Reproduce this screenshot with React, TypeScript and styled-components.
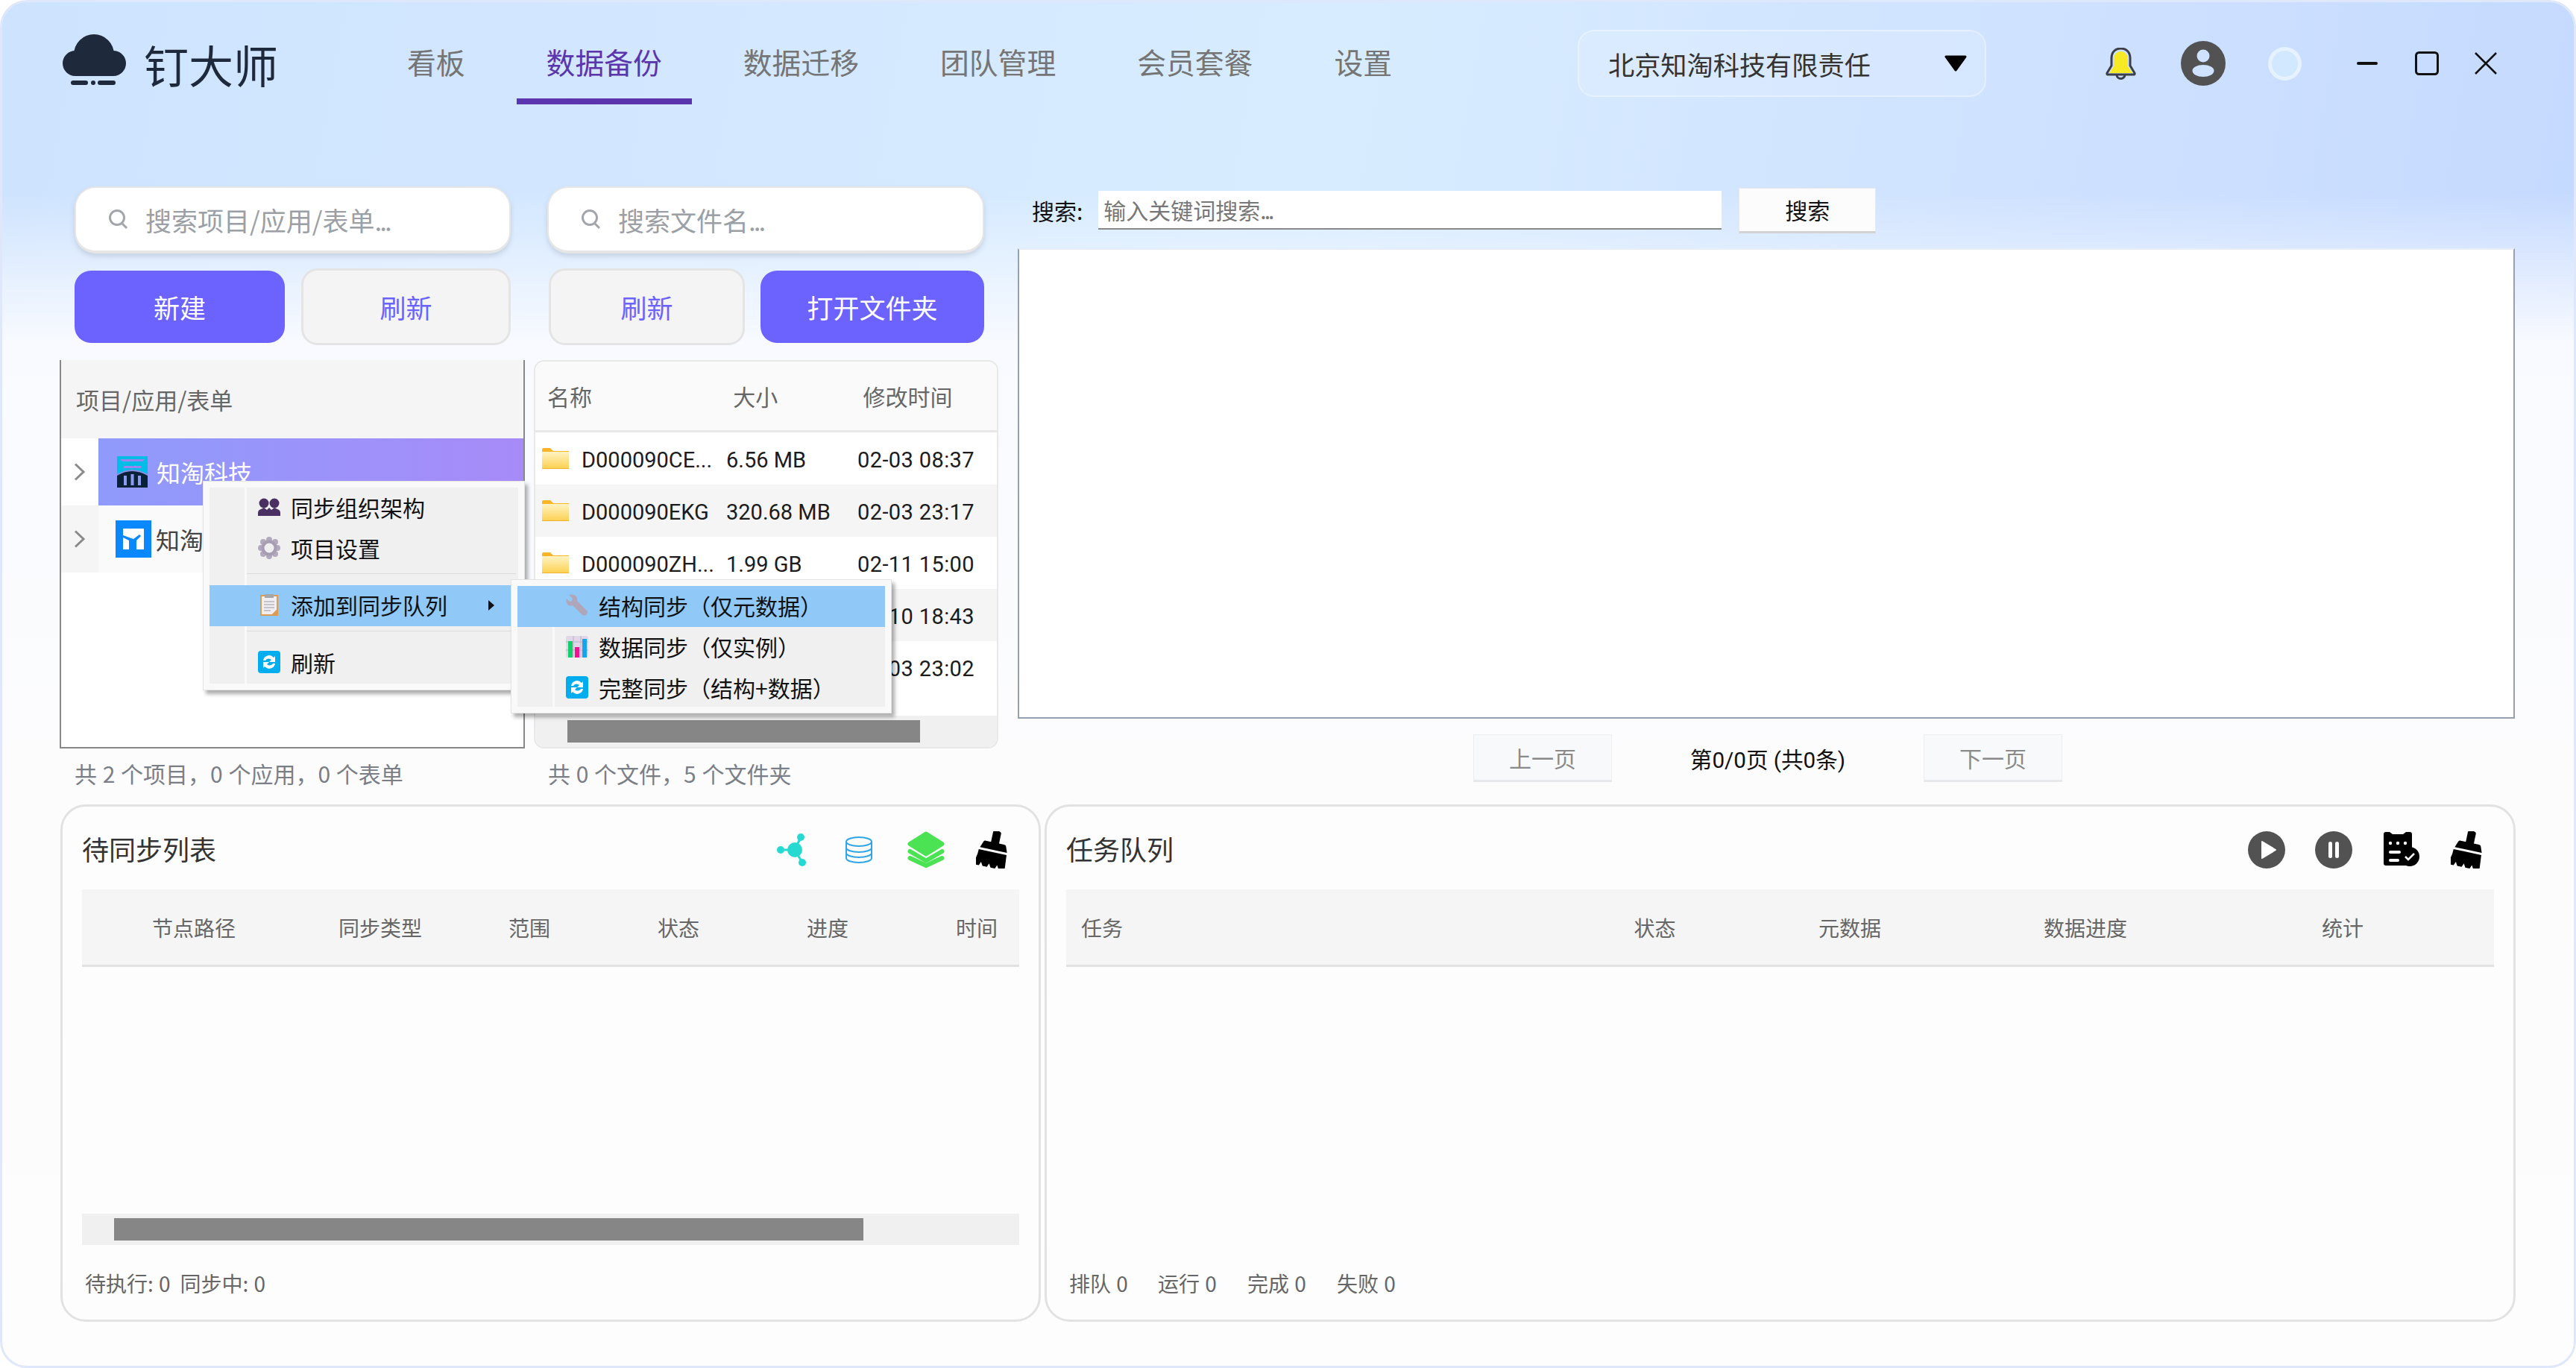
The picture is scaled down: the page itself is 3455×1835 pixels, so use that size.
import styled, { createGlobalStyle } from "styled-components";

const GlobalStyle = createGlobalStyle`
  html, body {
    margin: 0;
    padding: 0;
    background: #fff;
  }
  * {
    box-sizing: border-box;
  }
  body {
    font-family: "Noto Sans CJK SC", "Noto Sans", sans-serif;
  }
`;

const LATIN = `Roboto, "Noto Sans CJK SC", sans-serif`;

const Window = styled.div`
  position: relative;
  width: 3455px;
  height: 1835px;
  overflow: hidden;
  border-radius: 36px;
  border: 3px solid #dfe8fa;
  background:
    linear-gradient(180deg, rgba(248, 250, 255, 0) 0%, rgba(248, 250, 255, 0) 14%, #f8faff 25%, #fcfcfd 55%, #fdfdfd 100%),
    linear-gradient(100deg, #cee3fe 0%, #d3e8ff 25%, #d8ecff 48%, #cfe2ff 72%, #c2d7ff 100%);
`;

/* top bar */
const TopBar = styled.header`
  display: flex;
  align-items: flex-start;
  height: 247px;
  padding: 40px 0 0 81px;
`;

const Logo = styled.div`
  display: flex;
  align-items: flex-start;
  width: 422px;
  padding-top: 3px;
  color: #1e293b;
  font-size: 60px;
  line-height: 60px;
`;

const LogoText = styled.span`
  margin: 10px 0 0 24px;
`;

const Nav = styled.nav`
  display: flex;
  gap: 29px;
  width: 1610px;
`;

const NavItem = styled.div<{ $active?: boolean }>`
  height: 97px;
  padding: 11px 40px 0;
  font-size: 38.8px;
  line-height: 56px;
  color: ${({ $active }) => ($active ? "#5b35ad" : "#757575")};
  border-bottom: 8px solid ${({ $active }) => ($active ? "#5b35ad" : "transparent")};
`;

const CompanySelect = styled.div`
  display: flex;
  align-items: center;
  justify-content: space-between;
  width: 548px;
  height: 90px;
  margin-top: -3px;
  padding: 0 23px 0 39px;
  font-size: 35.2px;
  color: #333;
  background: rgba(255, 255, 255, 0.14);
  border: 2px solid rgba(255, 255, 255, 0.35);
  border-radius: 22px;
`;

const TopIcons = styled.div`
  display: flex;
  align-items: center;
  height: 90px;
  margin-top: -3px;
`;

const PlacedIcon = styled.svg<{ $left: number }>`
  display: block;
  flex: none;
  margin-left: ${({ $left }) => $left}px;
`;

const StatusDot = styled.div`
  width: 45px;
  height: 45px;
  margin-left: 57px;
  border-radius: 50%;
  background: #d2e8ff;
  border: 5px solid rgba(255, 255, 255, 0.45);
`;

/* main area */
const Main = styled.main`
  display: grid;
  grid-template-columns: 624px 623px 2008px;
  column-gap: 12px;
  height: 829px;
  padding-left: 77px;
`;

const Column = styled.section`
  display: flex;
  flex-direction: column;
`;

const RightColumn = styled(Column)`
  width: 2008px;
  margin-left: 14px;
`;

const SearchBox = styled.div<{ $left: number }>`
  display: flex;
  align-items: center;
  height: 90px;
  margin: 0 19px 20px ${({ $left }) => $left}px;
  padding-left: 43px;
  background: #fff;
  border-radius: 28px;
  border: 2px solid #e6e6e6;
  border-bottom-width: 4px;
  box-shadow: 0 4px 6px rgba(120, 130, 150, 0.25);
  font-size: 35px;
  color: #9aa0a6;
`;

const SearchText = styled.span`
  margin-left: 23px;
  white-space: nowrap;
`;

const Dots = styled.span`
  letter-spacing: -3px;
`;

const ButtonRow = styled.div<{ $gap: number }>`
  display: flex;
  gap: ${({ $gap }) => $gap}px;
  height: 103px;
  margin: 0 19px 20px 20px;
`;

const PrimaryButton = styled.div<{ $w: number }>`
  display: flex;
  align-items: center;
  justify-content: center;
  width: ${({ $w }) => $w}px;
  height: 97px;
  margin-top: 3px;
  border-radius: 22px;
  background: #6c63ff;
  color: #fff;
  font-size: 35px;
`;

const GhostButton = styled.div<{ $w: number }>`
  display: flex;
  align-items: center;
  justify-content: center;
  width: ${({ $w }) => $w}px;
  border-radius: 22px;
  background: #f4f4f4;
  border: 3px solid #e4e4e4;
  color: #6c63ff;
  font-size: 35px;
`;

const TreePanel = styled.div`
  height: 521px;
  border: 2px solid #888;
  border-top: none;
  background: #fff;
`;

const TreeHeader = styled.div`
  display: flex;
  align-items: center;
  height: 105px;
  padding-left: 20px;
  background: #f5f5f5;
  font-size: 31px;
  color: #666;
`;

const TreeRow = styled.div`
  display: flex;
  height: 90px;
`;

const TreeArrow = styled.div<{ $tint?: boolean }>`
  display: flex;
  align-items: center;
  justify-content: center;
  width: 50px;
  background: ${({ $tint }) => ($tint ? "#f5f5f5" : "#fff")};
`;

const TreeLabel = styled.div<{ $selected?: boolean }>`
  flex: 1;
  display: flex;
  align-items: center;
  gap: ${({ $selected }) => ($selected ? 12 : 6)}px;
  padding-left: ${({ $selected }) => ($selected ? 25 : 23)}px;
  font-size: 32px;
  color: ${({ $selected }) => ($selected ? "#fff" : "#444")};
  background: ${({ $selected }) => ($selected ? "linear-gradient(90deg, #8f9bfb, #a78bf8)" : "#fafafa")};
`;

const Summary = styled.div<{ $left: number }>`
  margin: 11px 0 0 ${({ $left }) => $left}px;
  font-size: 30px;
  line-height: 44px;
  word-spacing: 1px;
  color: #7a7f87;
  white-space: nowrap;
`;

const FilePanel = styled.div`
  display: flex;
  flex-direction: column;
  height: 521px;
  border: 2px solid #e8e8e8;
  border-radius: 14px;
  background: #fff;
  overflow: hidden;
`;

const FileHeader = styled.div`
  display: flex;
  align-items: center;
  flex: none;
  height: 95px;
  background: #fafafa;
  border-bottom: 3px solid #e8e8e8;
  font-size: 30px;
  color: #666;
`;

const FileHead = styled.div<{ $w: number; $pad: number }>`
  width: ${({ $w }) => $w}px;
  padding-left: ${({ $pad }) => $pad}px;
`;

const FileRows = styled.div`
  flex: 1;
`;

const FileRow = styled.div<{ $alt?: boolean }>`
  display: flex;
  align-items: center;
  height: 70px;
  padding-left: 9px;
  font-family: ${LATIN};
  font-size: 29px;
  color: #1c1c1c;
  background: ${({ $alt }) => ($alt ? "#f5f5f5" : "#fff")};
`;

const FileName = styled.div`
  width: 194px;
  margin-left: 17px;
  padding-top: 3px;
  white-space: nowrap;
  overflow: hidden;
`;

const FileSize = styled.div`
  width: 176px;
  padding-top: 3px;
  white-space: nowrap;
`;

const FileTime = styled.div`
  padding-top: 3px;
  letter-spacing: 0.4px;
  white-space: nowrap;
`;

const ScrollTrack = styled.div<{ $pad: number; $h: number }>`
  flex: none;
  height: ${({ $h }) => $h}px;
  padding: 6px 0 6px ${({ $pad }) => $pad}px;
  background: #f0f0f0;
`;

const ScrollThumb = styled.div<{ $w: number }>`
  width: ${({ $w }) => $w}px;
  height: 100%;
  background: #868686;
`;

/* right side search + preview */
const QueryRow = styled.div`
  display: flex;
  align-items: center;
  height: 62px;
  margin: 1px 0 20px;
  padding-left: 19px;
  font-size: 30px;
  color: #111;
`;

const QueryInput = styled.div`
  display: flex;
  align-items: center;
  width: 836px;
  height: 52px;
  margin-left: 21px;
  padding-left: 7px;
  background: #fff;
  border-bottom: 2px solid #888;
  color: #777;
  white-space: pre;
`;

const QueryButton = styled.div`
  display: flex;
  align-items: center;
  justify-content: center;
  width: 184px;
  height: 61px;
  margin-left: 23px;
  background: #fcfcfc;
  border: 1px solid #e8e8e8;
  border-bottom: 3px solid #d2d2d2;
`;

const Preview = styled.div`
  height: 631px;
  background: #fff;
  border: 2px solid #97a0b2;
  border-top: 2px solid #e6edf8;
`;

const Pager = styled.div`
  display: flex;
  align-items: center;
  height: 64px;
  margin: 21px 0 0 611px;
  font-size: 30px;
  color: #111;
`;

const PagerButton = styled.div`
  display: flex;
  align-items: center;
  justify-content: center;
  width: 186px;
  height: 64px;
  background: #f8f9fb;
  border: 1px solid #eceef2;
  border-bottom: 3px solid #e6e8ec;
  color: #8a8a8a;
`;

const PagerInfo = styled.div`
  width: 418px;
  text-align: center;
  font-family: ${LATIN};
  font-size: 29.6px;
`;

/* bottom panels */
const Bottom = styled.div`
  display: flex;
  gap: 5px;
  height: 694px;
  padding-left: 78px;
`;

const Panel = styled.section<{ $w: number }>`
  display: flex;
  flex-direction: column;
  width: ${({ $w }) => $w}px;
  padding: 0 26px 0 26px;
  background: #fdfdfd;
  border: 3px solid #e2e2e2;
  border-radius: 34px;
`;

const PanelHead = styled.div`
  display: flex;
  align-items: center;
  justify-content: space-between;
  flex: none;
  height: 111px;
`;

const PanelTitle = styled.h2`
  margin: 0;
  font-size: 36px;
  font-weight: 400;
  color: #333;
`;

const ToolIcons = styled.div`
  display: flex;
  align-items: center;
  padding: 4px 12px 0 0;
`;

const TableHead = styled.div`
  display: flex;
  flex: none;
  align-items: center;
  height: 104px;
  overflow: hidden;
  background: #f5f5f5;
  border-bottom: 3px solid #e2e2e2;
  font-size: 28px;
  color: #666;
`;

const HeadCell = styled.div<{ $w: number; $left?: boolean }>`
  flex: none;
  width: ${({ $w }) => $w}px;
  text-align: ${({ $left }) => ($left ? "left" : "center")};
  padding-left: ${({ $left }) => ($left ? 20 : 0)}px;
`;

const TableBody = styled.div`
  flex: 1;
`;

const Stats = styled.div`
  display: flex;
  align-items: center;
  flex: none;
  height: 100px;
  padding-top: 2px;
  font-size: 28px;
  color: #666;
`;

const StatItem = styled.span<{ $w: number }>`
  width: ${({ $w }) => $w}px;
  padding-left: 4px;
  word-spacing: 1px;
  white-space: nowrap;
`;

/* context menus */
const Menu = styled.div<{ $left: number; $top: number; $w: number; $h: number }>`
  position: absolute;
  left: ${({ $left }) => $left}px;
  top: ${({ $top }) => $top}px;
  width: ${({ $w }) => $w}px;
  height: ${({ $h }) => $h}px;
  padding: 8px;
  background: #f9f9f9;
  border: 1px solid #e4e4e4;
  box-shadow: 4px 5px 5px rgba(0, 0, 0, 0.32);
`;

const MenuInner = styled.div`
  display: flex;
  flex-direction: column;
  height: 100%;
  background: linear-gradient(90deg, #f0f0f0 47px, #f9f9f9 47px, #f9f9f9 50px, #f0f0f0 50px);
`;

const MenuItem = styled.div<{ $hover?: boolean }>`
  position: relative;
  display: flex;
  align-items: center;
  flex: none;
  height: 55px;
  padding: 0 0 4px 65px;
  font-size: 30px;
  color: #111;
  white-space: nowrap;
  background: ${({ $hover }) => ($hover ? "#90c8f8" : "transparent")};
`;

const MenuIcon = styled.svg`
  flex: none;
  margin-right: 14px;
`;

const MenuRule = styled.div<{ $before: number; $after: number }>`
  height: 2px;
  margin: ${({ $before, $after }) => `${$before}px 3px ${$after}px 50px`};
  background: #dcdcdc;
`;

const SubArrow = styled.div`
  position: absolute;
  right: 32px;
  top: 20px;
  width: 0;
  height: 0;
  border-left: 8px solid #111;
  border-top: 7px solid transparent;
  border-bottom: 7px solid transparent;
`;

const Chevron = () => (
  <svg width="16" height="24" viewBox="0 0 16 24" fill="none" stroke="#8a8a8a" strokeWidth="3">
    <path d="M2 1.5 13 12 2 22.5" />
  </svg>
);

const Magnifier = () => (
  <svg width="27" height="28" viewBox="0 0 27 28" fill="none" stroke="#a2a6ac" strokeWidth="3">
    <circle cx="12" cy="12" r="9.5" />
    <path d="M19 20l6 6" />
  </svg>
);

const Folder = () => (
  <svg width="36" height="28" viewBox="0 0 36 28">
    <defs>
      <linearGradient id="folderFill" x1="0" y1="0" x2="0" y2="1">
        <stop offset="0" stopColor="#fff3c4" />
        <stop offset="1" stopColor="#fdd050" />
      </linearGradient>
    </defs>
    <path d="M0 2a2 2 0 0 1 2-2h9l4 4h21v4H0z" fill="#f9b428" />
    <rect x="0" y="5" width="36" height="23" fill="url(#folderFill)" />
    <rect x="0" y="27" width="36" height="1" fill="#f0b030" />
  </svg>
);

const Broom = ({ left }: { left: number }) => (
  <PlacedIcon $left={left} width="46" height="50" viewBox="0 0 46 50">
    <g transform="rotate(12 23 25)">
      <path d="M18 2a3 3 0 0 1 3-3h5a3 3 0 0 1 3 3v13h7a3 3 0 0 1 3 2l3 8H5l3-8a3 3 0 0 1 3-2h7z" fill="#000" />
      <path d="M4 28h38l1.500 18a3 3 0 0 1-3 3h-5l-3-5-2 5h-6l-3-5-2 5h-6l-3-5-2 5H4q-4 0-3-4l1-3q2-6 2-14z" fill="#000" />
    </g>
  </PlacedIcon>
);

const CloudLogo = () => (
  <svg width="85" height="69" viewBox="0 0 85 69" fill="#1e293b">
    <circle cx="17" cy="39" r="17" />
    <circle cx="68" cy="39" r="17" />
    <circle cx="42" cy="27" r="27" />
    <rect x="17" y="28" width="51" height="28" />
    <rect x="11" y="62" width="23" height="6" rx="3" />
    <circle cx="41" cy="65" r="3" />
    <rect x="47" y="62" width="24" height="6" rx="3" />
  </svg>
);

const ZhitaoIcon = () => (
  <svg width="41" height="42" viewBox="0 0 41 42">
    <rect x="0" y="0" width="41" height="24" fill="#00bde8" />
    <path d="M4 4h33l-3 3H7z" fill="#9b86f0" />
    <path d="M9 13h23v3H9z" fill="#9b86f0" />
    <path d="M0 42V25q20-13 41 0v17z" fill="#0a2238" />
    <path d="M0 24q20-12 41 0v2q-21-12-41 0z" fill="#8f8ee8" />
    <path d="M9 26h4v13H9zM18.500 24h4v15h-4zM28 26h4v13h-4z" fill="#8f9bf0" />
  </svg>
);

const YunIcon = () => (
  <svg width="48" height="50" viewBox="0 0 48 50">
    <rect width="48" height="50" fill="#0a88ff" />
    <path d="M10 11h28v28H28V27l6-6-2-2-8 6-14-5zM10 23l8 4v12h-8z" fill="#fff" />
  </svg>
);

const PeopleIcon = () => (
  <MenuIcon width="30" height="24" viewBox="0 0 30 24" fill="#4a2f63">
    <circle cx="8" cy="7" r="6.500" />
    <circle cx="22" cy="7" r="6.500" />
    <path d="M0 24v-4q0-4 4-5l4-2 4 3 3-3 3 3 4-3 4 2q4 1 4 5v4z" />
  </MenuIcon>
);

const GearIcon = () => (
  <MenuIcon width="30" height="30" viewBox="0 0 30 30">
    <g fill="#b2a9bd">
      <circle cx="15" cy="4" r="4" />
      <circle cx="15" cy="26" r="4" />
      <circle cx="4" cy="15" r="4" />
      <circle cx="26" cy="15" r="4" />
      <circle cx="7" cy="7" r="4" />
      <circle cx="23" cy="7" r="4" />
      <circle cx="7" cy="23" r="4" />
      <circle cx="23" cy="23" r="4" />
    </g>
    <circle cx="15" cy="15" r="8.500" fill="#efefef" stroke="#a79db3" strokeWidth="4" />
  </MenuIcon>
);

const ClipboardIcon = () => (
  <MenuIcon width="30" height="30" viewBox="0 0 30 30">
    <rect x="3" y="2" width="24" height="28" fill="#dd9c52" />
    <path d="M5 4h20v18l-6 6H5z" fill="#f1eef2" />
    <path d="M19 28l6-6h2l-7 8z" fill="#dd9c52" />
    <rect x="9" y="1" width="12" height="5" fill="#a7a7a7" />
    <path d="M8 11h14M8 15h14M8 19h14M8 23h9" stroke="#9a9aa4" strokeWidth="1" />
  </MenuIcon>
);

const SyncIcon = () => (
  <MenuIcon width="30" height="30" viewBox="0 0 30 30">
    <rect width="30" height="30" rx="4" fill="#00adef" />
    <path d="M7 13a8 8 0 0 1 14-4l2-2v8h-8l3-3a5 5 0 0 0-8 1zM23 17a8 8 0 0 1-14 4l-2 2v-8h8l-3 3a5 5 0 0 0 8-1z" fill="#fff" />
  </MenuIcon>
);

const WrenchIcon = () => (
  <MenuIcon width="30" height="30" viewBox="0 0 30 30">
    <path d="M4 1L9 6l-1 3-3 1-4-4q-2 6 3 9 3 1 5 0l13 13q3 2 6-1 2-3 0-5L15 9q1-6-4-8-4-1-7 0z" fill="#b0a6b9" />
  </MenuIcon>
);

const ChartIcon = () => (
  <MenuIcon width="30" height="30" viewBox="0 0 30 30">
    <rect y="1" width="30" height="29" rx="3" fill="#e0d8e8" />
    <path d="M10 1v29M20 1v29M0 9h30M0 20h30" stroke="#bcb0c6" strokeWidth="1" />
    <rect x="3" y="8" width="6" height="22" fill="#12cf6a" />
    <rect x="12" y="16" width="6" height="14" fill="#f0128e" />
    <rect x="22" y="5" width="6" height="25" fill="#12a4ef" />
  </MenuIcon>
);

const files = [
  { name: "D000090CE...", size: "6.56 MB", time: "02-03 08:37" },
  { name: "D000090EKG", size: "320.68 MB", time: "02-03 23:17" },
  { name: "D000090ZH...", size: "1.99 GB", time: "02-11 15:00" },
  { name: "D000090DP...", size: "2.41 MB", time: "02-10 18:43" },
  { name: "D000090HX...", size: "15.72 MB", time: "02-03 23:02" },
];

const syncCols = [
  { t: "节点路径", w: 300 },
  { t: "同步类型", w: 200 },
  { t: "范围", w: 200 },
  { t: "状态", w: 200 },
  { t: "进度", w: 200 },
  { t: "时间", w: 200 },
];

const queueCols = [
  { t: "状态", w: 247 },
  { t: "元数据", w: 276 },
  { t: "数据进度", w: 356 },
  { t: "统计", w: 334 },
];

export default function App() {
  return (
    <Window>
      <GlobalStyle />

      <TopBar>
        <Logo>
          <CloudLogo />
          <LogoText>钉大师</LogoText>
        </Logo>
        <Nav>
          <NavItem>看板</NavItem>
          <NavItem $active>数据备份</NavItem>
          <NavItem>数据迁移</NavItem>
          <NavItem>团队管理</NavItem>
          <NavItem>会员套餐</NavItem>
          <NavItem>设置</NavItem>
        </Nav>
        <CompanySelect>
          北京知淘科技有限责任
          <svg width="32" height="22" viewBox="0 0 32 22">
            <path d="M3 2h26L16 20z" fill="#000" stroke="#000" strokeWidth="3" strokeLinejoin="round" />
          </svg>
        </CompanySelect>
        <TopIcons>
          <PlacedIcon $left={160} width="41" height="43" viewBox="0 0 41 43">
            <path d="M11 16c0-7 4-11 9.500-11S30 9 30 16v9l6 9H5l6-9z" fill="#f7ea25" />
            <path d="M8 14c0-8 5-13 12.500-13S33 6 33 14v10l6 10q.5 2-1 2H3q-1.500 0-1-2l6-10z" fill="none" stroke="#3b3f4a" strokeWidth="3" />
            <path d="M15 36a5.500 5.500 0 0 0 11 0" fill="none" stroke="#3b3f4a" strokeWidth="3" />
          </PlacedIcon>
          <PlacedIcon $left={60} width="60" height="60" viewBox="0 0 60 60">
            <circle cx="30" cy="30" r="30" fill="#525252" />
            <circle cx="30" cy="20" r="8.500" fill="#cfe2ff" />
            <ellipse cx="30" cy="40" rx="14.500" ry="8" fill="#cfe2ff" />
          </PlacedIcon>
          <StatusDot />
          <PlacedIcon $left={74} width="28" height="4" viewBox="0 0 28 4">
            <rect width="28" height="4" rx="2" fill="#111" />
          </PlacedIcon>
          <PlacedIcon $left={50} width="32" height="32" viewBox="0 0 32 32">
            <rect x="1.500" y="1.500" width="29" height="29" rx="4" fill="none" stroke="#111" strokeWidth="3" />
          </PlacedIcon>
          <PlacedIcon $left={48} width="30" height="30" viewBox="0 0 30 30">
            <path d="M1 1l28 28M29 1L1 29" stroke="#111" strokeWidth="2.500" />
          </PlacedIcon>
        </TopIcons>
      </TopBar>

      <Main>
        <Column>
          <SearchBox $left={20}>
            <Magnifier />
            <SearchText>搜索项目/应用/表单<Dots>...</Dots></SearchText>
          </SearchBox>
          <ButtonRow $gap={22}>
            <PrimaryButton $w={282}>新建</PrimaryButton>
            <GhostButton $w={281}>刷新</GhostButton>
          </ButtonRow>
          <TreePanel>
            <TreeHeader>项目/应用/表单</TreeHeader>
            <TreeRow>
              <TreeArrow>
                <Chevron />
              </TreeArrow>
              <TreeLabel $selected>
                <ZhitaoIcon />
                知淘科技
              </TreeLabel>
            </TreeRow>
            <TreeRow>
              <TreeArrow $tint>
                <Chevron />
              </TreeArrow>
              <TreeLabel>
                <YunIcon />
                知淘云
              </TreeLabel>
            </TreeRow>
          </TreePanel>
          <Summary $left={20}>共 2 个项目，0 个应用，0 个表单</Summary>
        </Column>

        <Column>
          <SearchBox $left={18}>
            <Magnifier />
            <SearchText>搜索文件名<Dots>...</Dots></SearchText>
          </SearchBox>
          <ButtonRow $gap={21}>
            <GhostButton $w={264}>刷新</GhostButton>
            <PrimaryButton $w={301}>打开文件夹</PrimaryButton>
          </ButtonRow>
          <FilePanel>
            <FileHeader>
              <FileHead $w={266} $pad={16}>名称</FileHead>
              <FileHead $w={175} $pad={0}>大小</FileHead>
              <FileHead $w={180} $pad={0}>修改时间</FileHead>
            </FileHeader>
            <FileRows>
              {files.map((f, i) => (
                <FileRow key={f.time} $alt={i % 2 === 1}>
                  <Folder />
                  <FileName>{f.name}</FileName>
                  <FileSize>{f.size}</FileSize>
                  <FileTime>{f.time}</FileTime>
                </FileRow>
              ))}
            </FileRows>
            <ScrollTrack $pad={43} $h={42}>
              <ScrollThumb $w={473} />
            </ScrollTrack>
          </FilePanel>
          <Summary $left={19}>共 0 个文件，5 个文件夹</Summary>
        </Column>

        <RightColumn>
          <QueryRow>
            搜索:
            <QueryInput>输入关键词搜索<Dots>...</Dots></QueryInput>
            <QueryButton>搜索</QueryButton>
          </QueryRow>
          <Preview />
          <Pager>
            <PagerButton>上一页</PagerButton>
            <PagerInfo>第0/0页 (共0条)</PagerInfo>
            <PagerButton>下一页</PagerButton>
          </Pager>
        </RightColumn>
      </Main>

      <Bottom>
        <Panel $w={1315}>
          <PanelHead>
            <PanelTitle>待同步列表</PanelTitle>
            <ToolIcons>
              <PlacedIcon $left={0} width="39" height="44" viewBox="0 0 39 44" fill="#26dad2">
                <path d="M24 22L32 5M24 22H5M24 22l10 17" stroke="#26dad2" strokeWidth="3" />
                <circle cx="24" cy="22" r="10" />
                <circle cx="32" cy="5" r="5" />
                <circle cx="5" cy="22" r="5" />
                <circle cx="34" cy="39" r="5" />
              </PlacedIcon>
              <PlacedIcon $left={53} width="36" height="36" viewBox="0 0 36 36" fill="none" stroke="#2ea6e6" strokeWidth="2">
                <ellipse cx="18" cy="7" rx="17" ry="6" />
                <path d="M1 7v22c0 3.500 7.500 6 17 6s17-2.500 17-6V7M1 15c0 3.500 7.500 6 17 6s17-2.500 17-6M1 22c0 3.500 7.500 6 17 6s17-2.500 17-6" />
              </PlacedIcon>
              <PlacedIcon $left={47} width="50" height="49" viewBox="0 0 50 49" fill="#4be354" stroke="#4be354" strokeLinejoin="round" strokeLinecap="round">
                <path d="M25 3.500 46.500 17 25 30.500 3.500 17z" strokeWidth="6" />
                <path d="M3.500 27 25 39.500 46.500 27" fill="none" strokeWidth="6" />
                <path d="M3.500 36 25 46 46.500 36" fill="none" strokeWidth="6" />
              </PlacedIcon>
              <Broom left={42} />
            </ToolIcons>
          </PanelHead>
          <TableHead>
            {syncCols.map((c) => (
              <HeadCell key={c.t} $w={c.w}>{c.t}</HeadCell>
            ))}
          </TableHead>
          <TableBody />
          <ScrollTrack $pad={43} $h={42}>
            <ScrollThumb $w={1005} />
          </ScrollTrack>
          <Stats>
            <StatItem $w={400}>待执行: 0&nbsp;&thinsp;同步中: 0</StatItem>
          </Stats>
        </Panel>

        <Panel $w={1973}>
          <PanelHead>
            <PanelTitle>任务队列</PanelTitle>
            <ToolIcons>
              <PlacedIcon $left={0} width="50" height="50" viewBox="0 0 50 50">
                <circle cx="25" cy="25" r="25" fill="#525252" />
                <path d="M19 14l18 11-18 11z" fill="#fff" stroke="#fff" strokeWidth="2" strokeLinejoin="round" />
              </PlacedIcon>
              <PlacedIcon $left={40} width="50" height="50" viewBox="0 0 50 50">
                <circle cx="25" cy="25" r="25" fill="#525252" />
                <rect x="18" y="14" width="5" height="22" rx="2.500" fill="#fff" />
                <rect x="27" y="14" width="5" height="22" rx="2.500" fill="#fff" />
              </PlacedIcon>
              <PlacedIcon $left={42} width="48" height="48" viewBox="0 0 48 48">
                <path d="M3 0h5l4 3h14l4-3h5a3 3 0 0 1 3 3v42H3a3 3 0 0 1-3-3V3a3 3 0 0 1 3-3z" fill="#000" />
                <circle cx="35" cy="33" r="13" fill="#000" />
                <circle cx="9" cy="15" r="2.200" fill="#fff" />
                <circle cx="19" cy="15" r="2.200" fill="#fff" />
                <circle cx="29" cy="15" r="2.200" fill="#fff" />
                <rect x="7" y="25" width="16" height="4" rx="2" fill="#fff" />
                <rect x="7" y="36" width="14" height="4" rx="2" fill="#fff" />
                <path d="M29 33l4 4 8-8" fill="none" stroke="#fff" strokeWidth="2.500" />
              </PlacedIcon>
              <Broom left={42} />
            </ToolIcons>
          </PanelHead>
          <TableHead>
            <HeadCell $w={666} $left>任务</HeadCell>
            {queueCols.map((c) => (
              <HeadCell key={c.t} $w={c.w}>{c.t}</HeadCell>
            ))}
          </TableHead>
          <TableBody />
          <Stats>
            <StatItem $w={119}>排队 0</StatItem>
            <StatItem $w={120}>运行 0</StatItem>
            <StatItem $w={120}>完成 0</StatItem>
            <StatItem $w={120}>失败 0</StatItem>
          </Stats>
        </Panel>
      </Bottom>

      <Menu $left={269} $top={642} $w={432} $h={281}>
        <MenuInner>
          <MenuItem>
            <PeopleIcon />同步组织架构
          </MenuItem>
          <MenuItem>
            <GearIcon />项目设置
          </MenuItem>
          <MenuRule $before={5} $after={15} />
          <MenuItem $hover>
            <ClipboardIcon />添加到同步队列
            <SubArrow />
          </MenuItem>
          <MenuRule $before={6} $after={15} />
          <MenuItem>
            <SyncIcon />刷新
          </MenuItem>
        </MenuInner>
      </Menu>

      <Menu $left={682} $top={774} $w={511} $h={180}>
        <MenuInner>
          <MenuItem $hover>
            <WrenchIcon />结构同步（仅元数据）
          </MenuItem>
          <MenuItem>
            <ChartIcon />数据同步（仅实例）
          </MenuItem>
          <MenuItem>
            <SyncIcon />完整同步（结构+数据）
          </MenuItem>
        </MenuInner>
      </Menu>
    </Window>
  );
}
